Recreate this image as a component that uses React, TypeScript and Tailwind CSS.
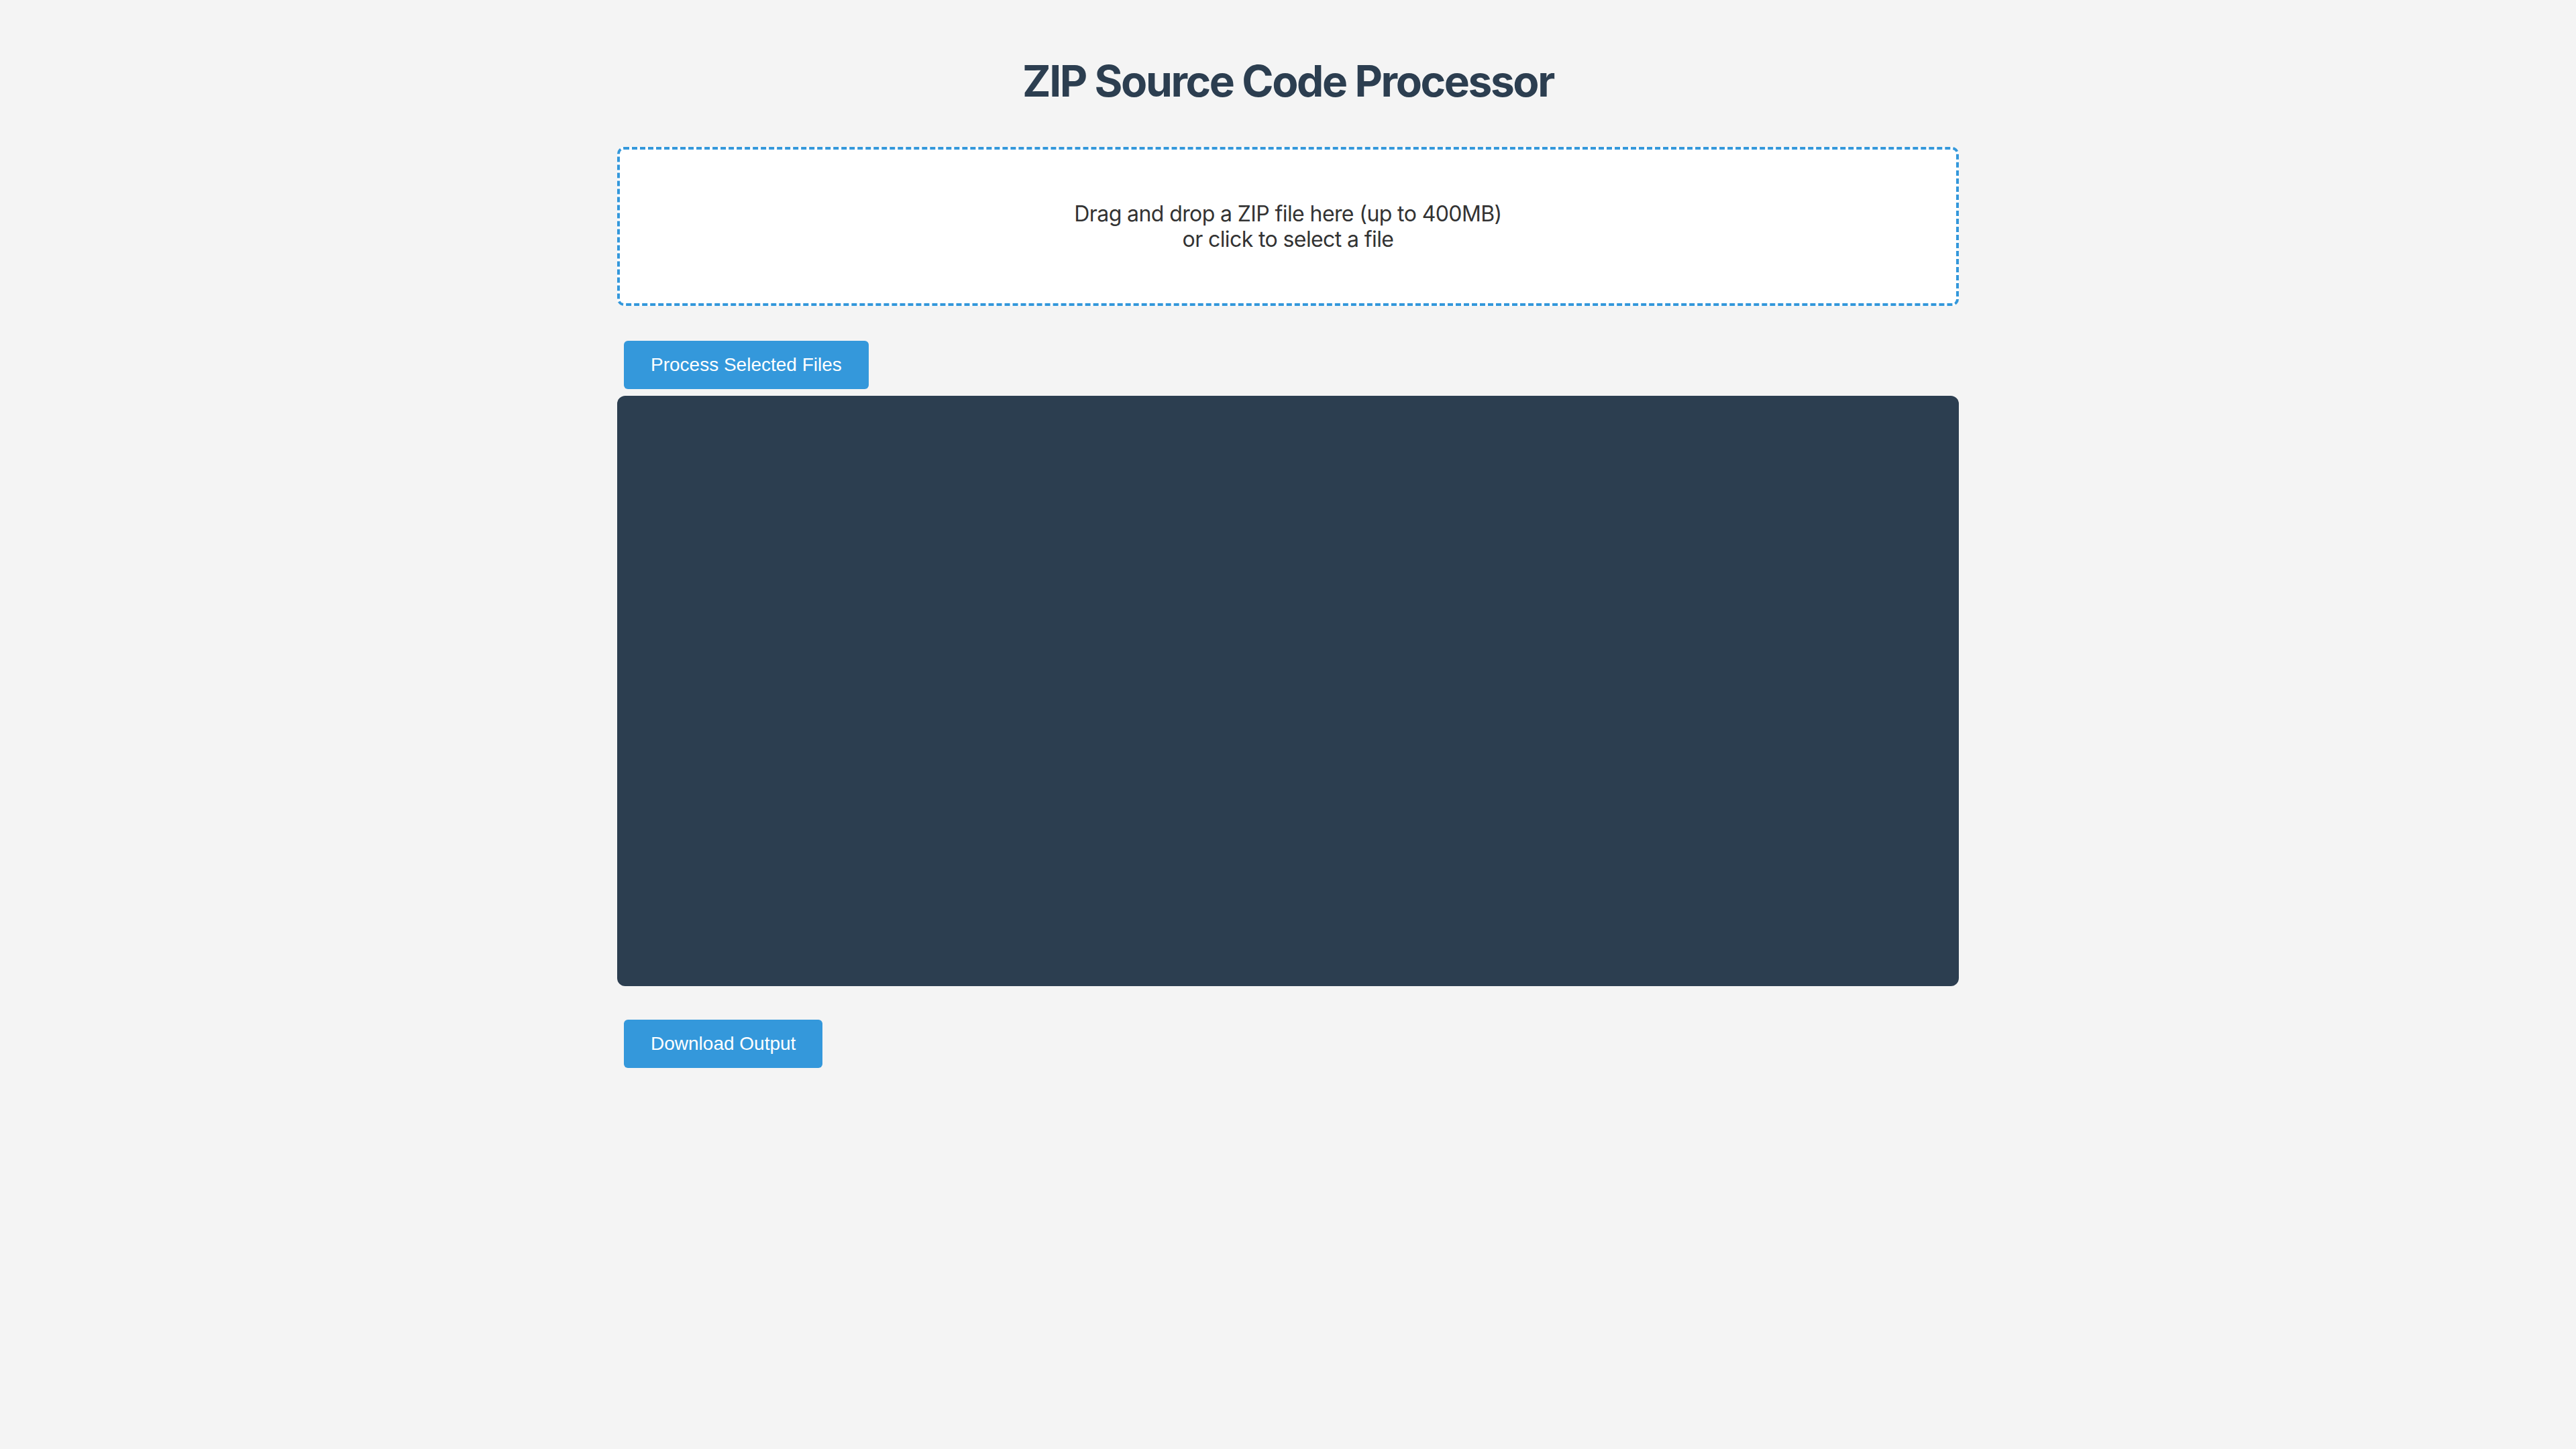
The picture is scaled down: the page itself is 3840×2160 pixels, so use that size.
const btn =
  "ml-[10px] h-[72px] px-[40px] rounded-[6px] bg-[#3498db] text-white text-[28px] leading-[32px] font-['Liberation_Sans',Arial,sans-serif] cursor-pointer";

export default function App() {
  return (
    <div className="min-h-screen bg-[#f4f4f4] px-[40px] pt-[40px] font-['Inter','Noto_Sans',sans-serif]">
      <div className="mx-auto max-w-[2000px]">
        <h1 className="mt-[42px] mb-[59px] text-center text-[64px] leading-[78px] font-bold tracking-[-2.4px] text-[#2c3e50]">
          ZIP Source Code Processor
        </h1>

        <div className="flex h-[237px] items-center justify-center rounded-[10px] border-4 border-dashed border-[#3498db] bg-white text-center text-[32px] leading-[38px] tracking-[-0.6px] text-[#333333]">
          <p>
            Drag and drop a ZIP file here (up to 400MB)
            <br />
            or click to select a file
          </p>
        </div>

        <div className="mt-[52px]">
          <button className={btn}>Process Selected Files</button>
        </div>

        <div className="mt-[10px] h-[880px] rounded-[12px] bg-[#2c3e50]" />

        <div className="mt-[50px]">
          <button className={btn}>Download Output</button>
        </div>
      </div>
    </div>
  );
}
